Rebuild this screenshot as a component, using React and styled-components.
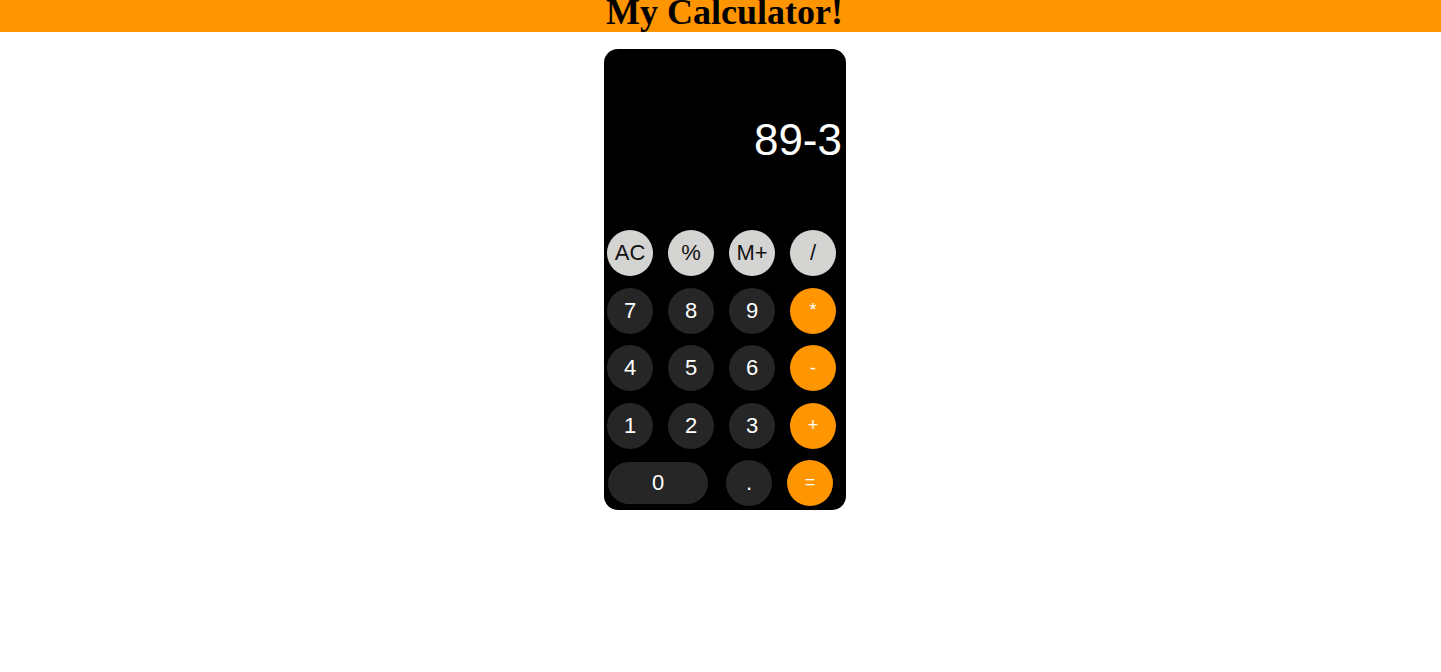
import React from 'react';
import styled, { createGlobalStyle } from 'styled-components';

const GlobalStyle = createGlobalStyle`
  body {
    margin: 0;
    background: #fff;
  }
`;

const Header = styled.h1`
  margin: 0;
  height: 32px;
  background: #ff9500;
  color: #000;
  font-family: "Liberation Serif", "Times New Roman", serif;
  font-weight: bold;
  font-size: 36px;
  line-height: 24px;
  text-align: center;
  padding-left: 8px;
  overflow: hidden;
`;

const Page = styled.main`
  display: flex;
  justify-content: center;
  padding: 17px 0 0 9px;
`;

const Calculator = styled.div`
  width: 242px;
  height: 461px;
  box-sizing: border-box;
  background: #000;
  border-radius: 14px;
  display: flex;
  flex-direction: column;
  padding: 0 0 0 3px;
`;

const Display = styled.div`
  height: 181px;
  display: flex;
  align-items: flex-end;
  justify-content: flex-end;
  padding: 0 4px 68px 0;
  box-sizing: border-box;
  color: #fff;
  font-family: "Liberation Sans", Arial, sans-serif;
  font-size: 44px;
  line-height: 1;
`;

const Keys = styled.div`
  display: grid;
  grid-template-columns: repeat(4, 46px);
  grid-auto-rows: 46px;
  column-gap: 15px;
  row-gap: 11.5px;
`;

const BottomRow = styled.div`
  display: flex;
  align-items: center;
  margin-top: 11px;
  padding-left: 1px;
`;

const variants = {
  fn: { bg: '#d4d4d2', fg: '#111' },
  num: { bg: '#262626', fg: '#fff' },
  op: { bg: '#ff9500', fg: '#fff' },
};

const Key = styled.button`
  width: ${(p) => p.$w || 46}px;
  height: ${(p) => p.$h || 46}px;
  margin-left: ${(p) => p.$ml || 0}px;
  border: none;
  border-radius: 999px;
  padding: 0;
  background: ${(p) => variants[p.$kind].bg};
  color: ${(p) => variants[p.$kind].fg};
  font-family: "Liberation Sans", Arial, sans-serif;
  font-size: ${(p) => (p.$kind === 'op' ? 18 : 22)}px;
  display: flex;
  align-items: center;
  justify-content: center;
  cursor: pointer;
`;

const rows = [
  [['AC', 'fn'], ['%', 'fn'], ['M+', 'fn'], ['/', 'fn']],
  [['7', 'num'], ['8', 'num'], ['9', 'num'], ['*', 'op']],
  [['4', 'num'], ['5', 'num'], ['6', 'num'], ['-', 'op']],
  [['1', 'num'], ['2', 'num'], ['3', 'num'], ['+', 'op']],
];

export default function App() {
  return (
    <>
      <GlobalStyle />
      <Header>My Calculator!</Header>
      <Page>
        <Calculator>
          <Display>89-3</Display>
          <Keys>
            {rows.flat().map(([label, kind]) => (
              <Key key={label} $kind={kind}>
                {label}
              </Key>
            ))}
          </Keys>
          <BottomRow>
            <Key $kind="num" $w={100} $h={42}>0</Key>
            <Key $kind="num" $ml={18}>.</Key>
            <Key $kind="op" $ml={15}>=</Key>
          </BottomRow>
        </Calculator>
      </Page>
    </>
  );
}
